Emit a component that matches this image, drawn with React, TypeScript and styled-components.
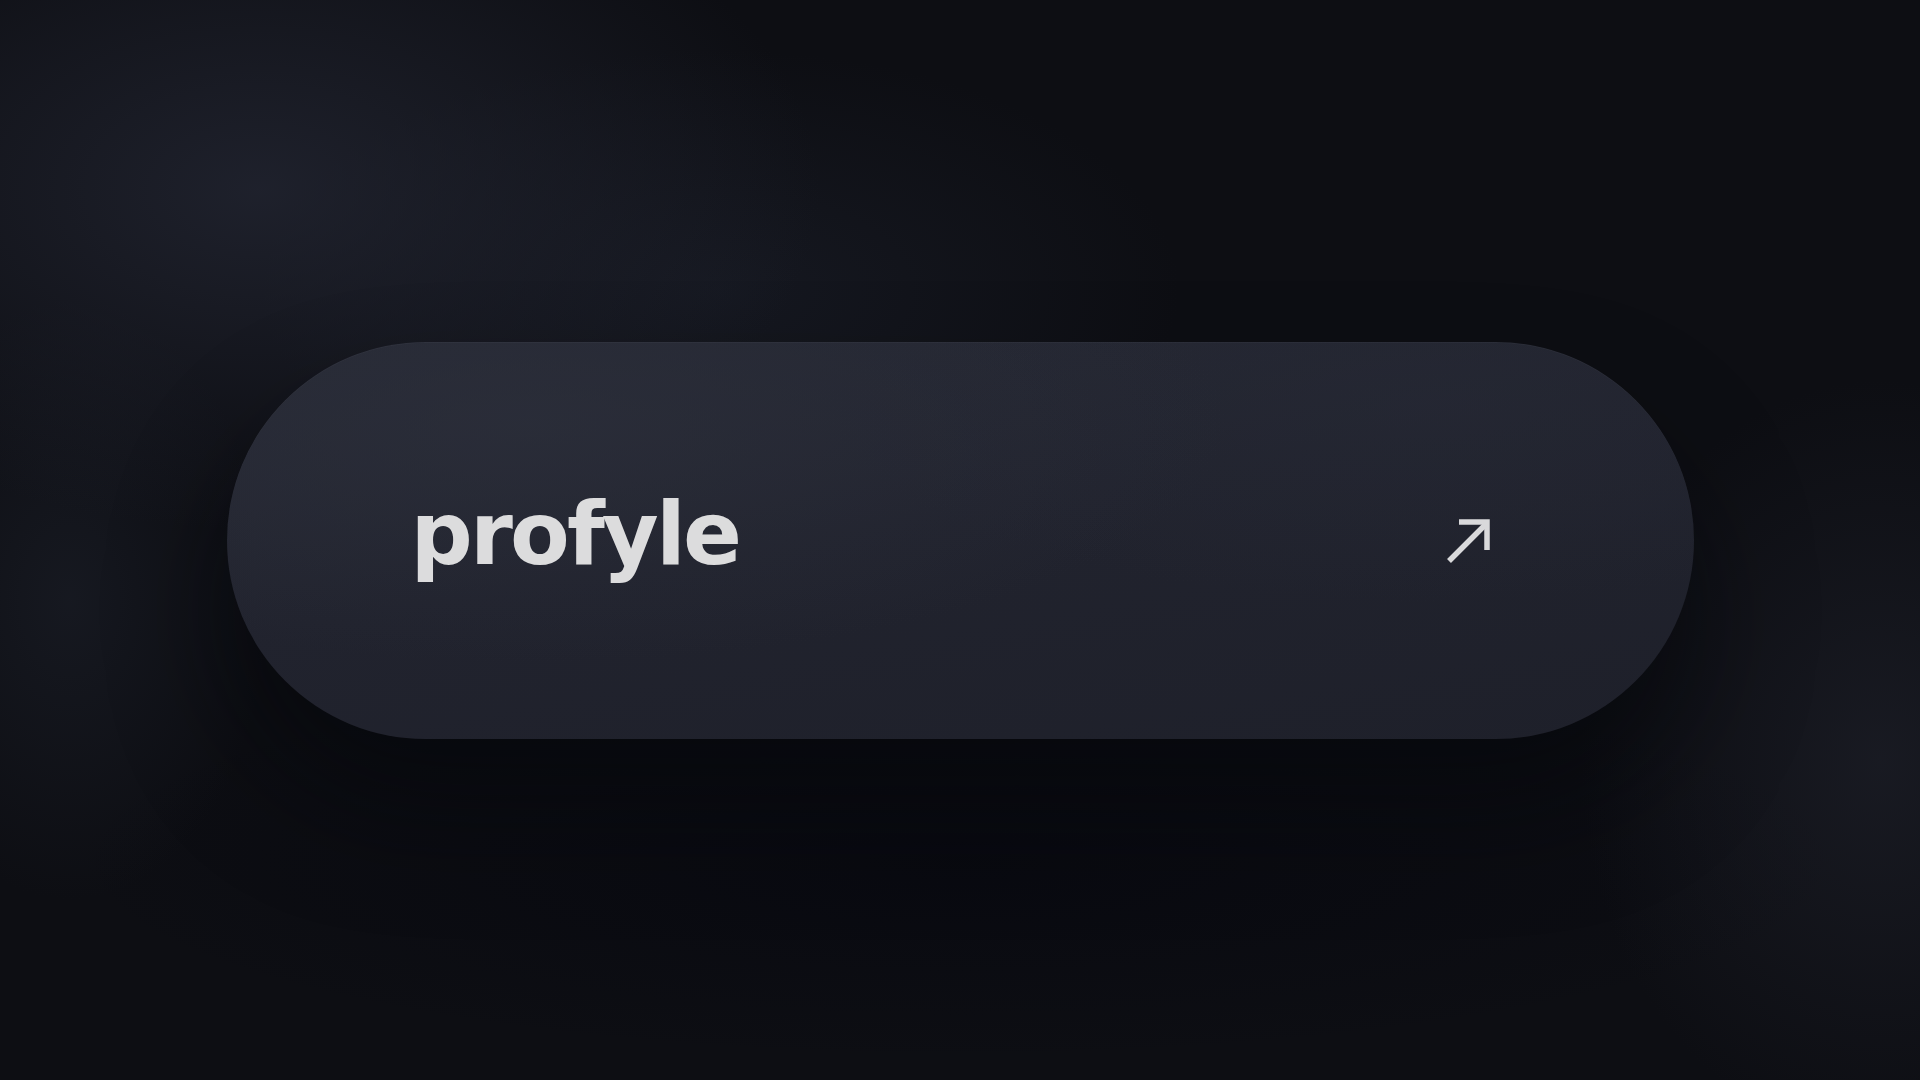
import React from 'react';
import styled, { createGlobalStyle } from 'styled-components';

const GlobalStyle = createGlobalStyle`
  html, body {
    margin: 0;
    padding: 0;
    height: 100%;
  }
  body {
    background: #0c0d12;
    font-family: 'DejaVu Sans', 'Open Sans', sans-serif;
  }
  #root {
    height: 100%;
  }
`;

const SStage = styled.main`
  width: 1920px;
  height: 1080px;
  display: flex;
  align-items: center;
  justify-content: center;
  overflow: hidden;
  background:
    radial-gradient(ellipse 560px 340px at 260px 190px, rgba(36, 39, 52, 0.75), rgba(36, 39, 52, 0) 100%),
    radial-gradient(ellipse 460px 240px at 720px 290px, rgba(30, 34, 46, 0.5), rgba(30, 34, 46, 0) 100%),
    radial-gradient(ellipse 300px 380px at 1880px 760px, rgba(32, 34, 44, 0.6), rgba(32, 34, 44, 0) 100%),
    radial-gradient(ellipse 200px 300px at 70px 600px, rgba(26, 29, 38, 0.7), rgba(26, 29, 38, 0) 100%),
    radial-gradient(ellipse 900px 200px at 960px 860px, rgba(8, 9, 16, 0.9), rgba(8, 9, 16, 0) 100%),
    #0d0e13;
`;

const SPill = styled.a`
  box-sizing: border-box;
  width: 1467px;
  height: 397px;
  border-radius: 199px;
  display: flex;
  align-items: center;
  justify-content: space-between;
  padding: 0 203px 0 184px;
  text-decoration: none;
  background:
    radial-gradient(ellipse 700px 240px at 300px 80px, rgba(44, 47, 59, 0.7), rgba(44, 47, 59, 0) 100%),
    radial-gradient(ellipse 600px 200px at 1200px 60px, rgba(38, 41, 53, 0.6), rgba(38, 41, 53, 0) 100%),
    linear-gradient(170deg, #272a35 0%, #21232e 45%, #1e202a 100%);
  box-shadow:
    0 70px 110px rgba(4, 5, 10, 0.5),
    inset 0 1px 0 rgba(255, 255, 255, 0.03);
`;

const SWordmark = styled.span`
  font-family: 'DejaVu Sans', 'Open Sans', sans-serif;
  font-weight: 700;
  font-size: 87px;
  line-height: 1;
  letter-spacing: -2.8px;
  color: #dcdcdd;
  transform: translateY(-6px);
`;

const SArrow = styled.svg`
  width: 44px;
  height: 45px;
  display: block;
`;

const ArrowIcon = () => (
  <SArrow viewBox="0 0 44 45" fill="none">
    <path d="M2 43 L40 5" stroke="#d9d9db" strokeWidth="5.5" strokeLinecap="butt" />
    <path d="M12 4 H40 V32" stroke="#d9d9db" strokeWidth="5.5" strokeLinecap="butt" />
  </SArrow>
);

export default function App() {
  return (
    <>
      <GlobalStyle />
      <SStage>
        <SPill href="#">
          <SWordmark>profyle</SWordmark>
          <ArrowIcon />
        </SPill>
      </SStage>
    </>
  );
}
